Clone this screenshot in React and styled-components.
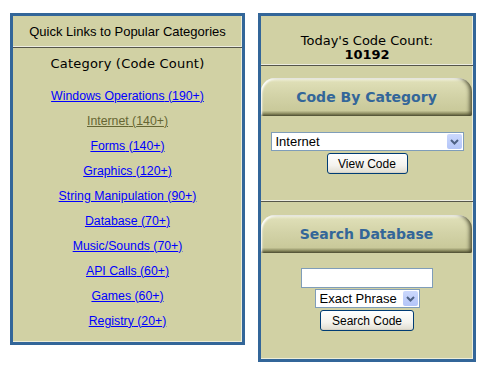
import styled, { createGlobalStyle } from 'styled-components';

const categories = [
    { name: 'Windows Operations', count: '190+' },
    { name: 'Internet', count: '140+', visited: true },
    { name: 'Forms', count: '140+' },
    { name: 'Graphics', count: '120+' },
    { name: 'String Manipulation', count: '90+' },
    { name: 'Database', count: '70+' },
    { name: 'Music/Sounds', count: '70+' },
    { name: 'API Calls', count: '60+' },
    { name: 'Games', count: '60+' },
    { name: 'Registry', count: '20+' },
];

function Chevron() {
    return (
        <svg width="9" height="6" viewBox="0 0 9 6">
            <path d="M1 1 L4.5 4.5 L8 1" fill="none" stroke="#4d6185" strokeWidth="2" />
        </svg>
    );
}

function Dropdown({ width, options, value }) {
    return (
        <SelectWrap $width={width}>
            <Select defaultValue={value}>
                {options.map(o => <option key={o}>{o}</option>)}
            </Select>
            <Arrow><Chevron /></Arrow>
        </SelectWrap>
    );
}

export default function App() {
    return (
        <>
            <GlobalStyle />
            <Page>
                <Panel $width={235}>
                    <Header>Quick Links to Popular Categories</Header>
                    <Divider />
                    <Heading>Category (Code Count)</Heading>
                    <LinkList>
                        {categories.map(c => (
                            <LinkRow key={c.name}>
                                <CatLink href="#" $visited={c.visited}>{c.name} ({c.count})</CatLink>
                            </LinkRow>
                        ))}
                    </LinkList>
                </Panel>

                <Panel $width={218}>
                    <Count>
                        Today's Code Count:
                        <b>10192</b>
                    </Count>
                    <Divider />
                    <Tab $top={12}>Code By Category</Tab>
                    <Form $top={16} $bottom={26}>
                        <Dropdown width={193} value="Internet" options={['Windows Operations', 'Internet', 'Forms', 'Graphics', 'String Manipulation', 'Database', 'Music/Sounds', 'API Calls', 'Games', 'Registry']} />
                        <Button $width={81}>View Code</Button>
                    </Form>
                    <Divider />
                    <Tab $top={13}>Search Database</Tab>
                    <Form $top={15} $bottom={28}>
                        <Input type="text" />
                        <Dropdown width={105} value="Exact Phrase" options={['Exact Phrase', 'All Words', 'Any Word']} />
                        <Button $width={94}>Search Code</Button>
                    </Form>
                </Panel>
            </Page>
        </>
    );
}

// styledComponents
const GlobalStyle = createGlobalStyle`
    body {
        margin: 0;
        background: #ffffff;
        font-family: "Liberation Sans", Arial, sans-serif;
    }
`;

const Page = styled.div`
    display: flex;
    align-items: flex-start;
    gap: 13px;
    padding: 13px 0 0 10px;
`;

const Panel = styled.div`
    box-sizing: border-box;
    width: ${p => p.$width}px;
    border: 3px solid #336699;
    background-color: #d1d1a4;
    box-shadow: inset -1px -1px 0 #ededd8;
    display: flex;
    flex-direction: column;
`;

const Header = styled.div`
    height: 30px;
    display: flex;
    align-items: center;
    justify-content: center;
    font-family: "Liberation Sans", Arial, sans-serif;
    font-size: 13px;
    color: #000;
`;

const Divider = styled.div`
    height: 0;
    border-top: 1px solid #ecece0;
    border-bottom: 1px solid #55554a;
`;

const Heading = styled.div`
    padding-top: 8px;
    line-height: 15px;
    text-align: center;
    font-family: "DejaVu Sans", Verdana, sans-serif;
    font-size: 13px;
    letter-spacing: 0.2px;
    color: #000;
`;

const LinkList = styled.div`
    margin-top: 12px;
    padding-bottom: 9px;
    display: flex;
    flex-direction: column;
`;

const LinkRow = styled.div`
    height: 25px;
    display: flex;
    align-items: center;
    justify-content: center;
`;

const CatLink = styled.a`
    font-family: "Liberation Sans", Arial, sans-serif;
    font-size: 12.3px;
    color: ${p => (p.$visited ? '#666633' : '#0000ff')};
    text-decoration: underline;
`;

const Count = styled.div`
    padding: 18px 0 2px;
    display: flex;
    flex-direction: column;
    align-items: center;
    line-height: 14px;
    font-family: "DejaVu Sans", Verdana, sans-serif;
    font-size: 13px;
    color: #000;
    b {
        font-weight: bold;
    }
`;

const Tab = styled.div`
    margin-top: ${p => p.$top}px;
    margin-right: 1px;
    height: 38px;
    border-radius: 14px 14px 2px 2px;
    background: linear-gradient(#f7f7e6 0, #dedeb6 4px, #d3d3a8 45%, #c9c99a 86%, #8a8a60 94%, #4e4e32 100%);
    box-shadow: inset -4px 0 4px -2px #4a4a30, inset 2px 2px 2px -1px #ffffff;
    display: flex;
    align-items: center;
    justify-content: center;
    font-family: "DejaVu Sans", Verdana, sans-serif;
    font-weight: bold;
    font-size: 14px;
    color: #336699;
`;

const Form = styled.div`
    margin-top: ${p => p.$top}px;
    margin-bottom: ${p => p.$bottom}px;
    display: flex;
    flex-direction: column;
    align-items: center;
    gap: 1px;
`;

const SelectWrap = styled.div`
    position: relative;
    width: ${p => p.$width}px;
    height: 19px;
`;

const Select = styled.select`
    appearance: none;
    box-sizing: border-box;
    width: 100%;
    height: 100%;
    margin: 0;
    padding: 0 0 0 4px;
    border: 1px solid #7f9db9;
    border-radius: 0;
    background: #ffffff;
    font-family: "Liberation Sans", Arial, sans-serif;
    font-size: 13px;
    color: #000;
    outline: none;
`;

const Arrow = styled.span`
    position: absolute;
    top: 2px;
    right: 2px;
    width: 15px;
    height: 15px;
    border-radius: 2px;
    background: linear-gradient(#cbd8fd, #b3c5f8);
    display: flex;
    align-items: center;
    justify-content: center;
    pointer-events: none;
`;

const Input = styled.input`
    box-sizing: border-box;
    width: 132px;
    height: 20px;
    margin: 0;
    border: 1px solid #7f9db9;
    background: #ffffff;
    outline: none;
`;

const Button = styled.button`
    box-sizing: border-box;
    width: ${p => p.$width}px;
    height: 21px;
    margin-top: 1px;
    padding: 0;
    border: 1px solid #003c74;
    border-radius: 3px;
    background: linear-gradient(#ffffff, #f4f3ee 60%, #e4e1d6 92%, #d0cbbd);
    font-family: "Liberation Sans", Arial, sans-serif;
    font-size: 12px;
    color: #000;
`;
